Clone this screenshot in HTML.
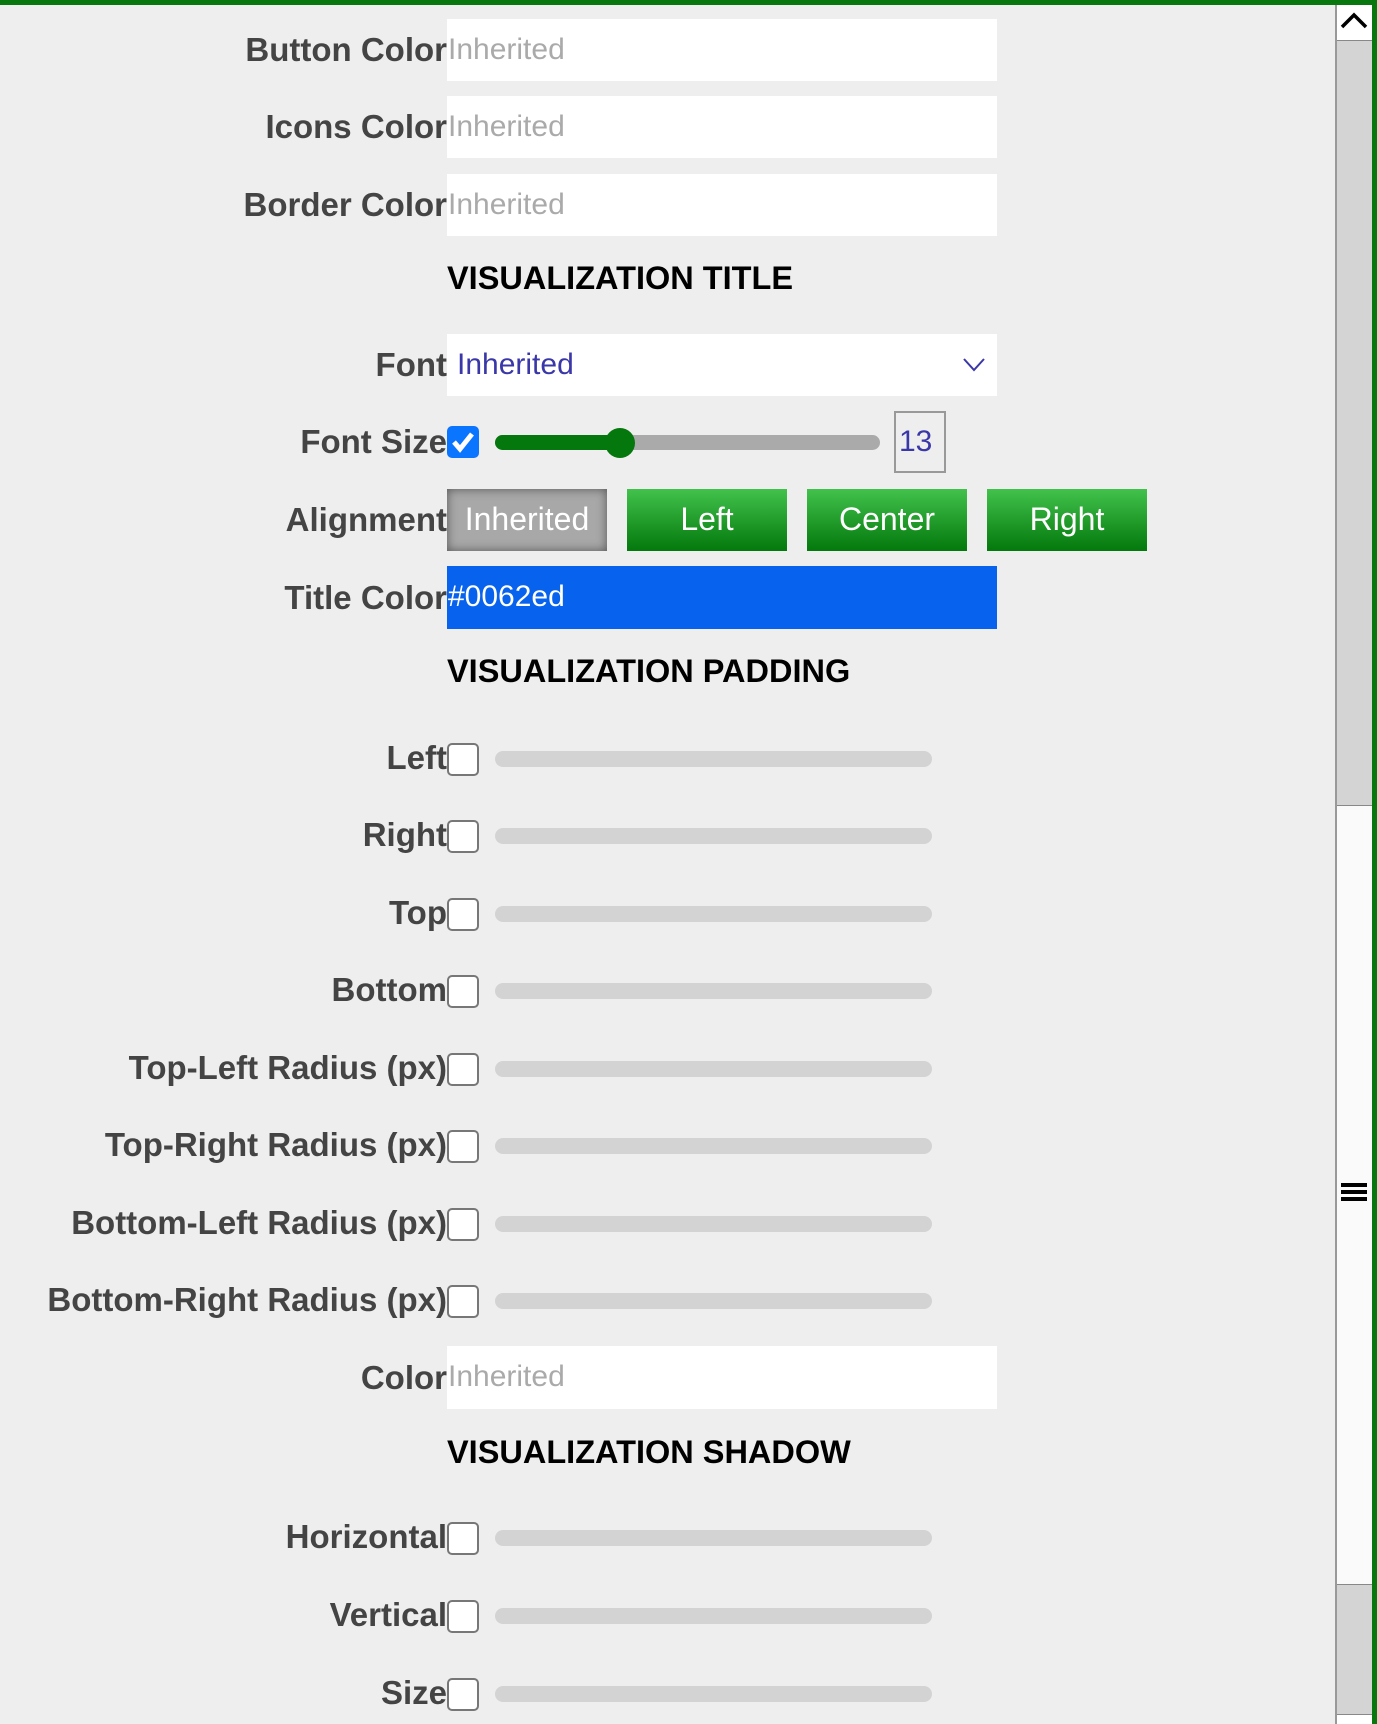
<!DOCTYPE html>
<html><head><meta charset="utf-8"><style>
*{box-sizing:border-box;margin:0;padding:0}
html,body{width:1377px;height:1724px;overflow:hidden;background:#eee;font-family:"Liberation Sans",Arial,sans-serif}
.top{position:absolute;left:0;top:0;width:1377px;height:5px;background:#08780e}
.rb{position:absolute;right:0;top:0;width:5px;height:1724px;background:#08780e}
.lab{position:absolute;right:930px;font-weight:bold;font-size:33px;color:#444;line-height:36px;white-space:nowrap}
.inp{position:absolute;left:447px;width:550px;height:62px;background:#fff;font-size:30px;color:#aaa;line-height:62px;padding-left:1px}
.h{position:absolute;left:447px;font-weight:bold;font-size:32.5px;color:#000;line-height:36px}
.cb{position:absolute;left:447px;width:32px;height:33px;border:2px solid #777;border-radius:5px;background:#fff}
.sl{position:absolute;left:495px;width:437px;height:16px;background:#d3d3d3;border-radius:8px}
.btn{position:absolute;top:489px;width:160px;height:62px;color:#fff;font-size:32px;line-height:60px;text-align:center;background:linear-gradient(#42c24c,#04780c)}
</style></head><body>
<div class="top"></div>
<div class="lab" style="top:32px">Button Color</div><div class="inp" style="top:19px">Inherited</div>
<div class="lab" style="top:109px">Icons Color</div><div class="inp" style="top:96px">Inherited</div>
<div class="lab" style="top:187px">Border Color</div><div class="inp" style="top:174px">Inherited</div>
<div class="h" style="top:260px">VISUALIZATION TITLE</div>
<div class="lab" style="top:347px">Font</div>
<div class="inp" style="top:334px;color:#3a37a8;padding-left:10px">Inherited
<svg style="position:absolute;right:12px;top:24px" width="22" height="14" viewBox="0 0 22 14"><path d="M1 1L11 12L21 1" fill="none" stroke="#3a37a8" stroke-width="2"/></svg></div>
<div class="lab" style="top:424px">Font Size</div>
<div style="position:absolute;left:447px;top:426px;width:32px;height:32px;background:#0a75ff;border-radius:5px"><svg width="32" height="32" viewBox="0 0 32 32"><path d="M7 16L13 23L25 8" fill="none" stroke="#fff" stroke-width="5"/></svg></div>
<div style="position:absolute;left:495px;top:435px;width:385px;height:15px;background:#aaa;border-radius:8px"></div>
<div style="position:absolute;left:495px;top:435px;width:125px;height:15px;background:#04780c;border-radius:8px"></div>
<div style="position:absolute;left:605px;top:428px;width:30px;height:30px;background:#04780c;border-radius:50%"></div>
<div style="position:absolute;left:894px;top:411px;width:52px;height:62px;border:2px solid #999;color:#3a37a8;font-size:30px;line-height:58px;padding-left:3px">13</div>
<div class="lab" style="top:502px">Alignment</div>
<div class="btn" style="left:447px;background:#a8a8a8;box-shadow:inset 0 0 10px #555">Inherited</div>
<div class="btn" style="left:627px">Left</div>
<div class="btn" style="left:807px">Center</div>
<div class="btn" style="left:987px">Right</div>
<div class="lab" style="top:580px">Title Color</div><div class="inp" style="top:566px;background:#0762ed;color:#fff;height:63px">#0062ed</div>
<div class="h" style="top:653px">VISUALIZATION PADDING</div>

<div class="lab" style="top:740px">Left</div><div class="cb" style="top:743px"></div><div class="sl" style="top:751px"></div>
<div class="lab" style="top:817px">Right</div><div class="cb" style="top:820px"></div><div class="sl" style="top:828px"></div>
<div class="lab" style="top:895px">Top</div><div class="cb" style="top:898px"></div><div class="sl" style="top:906px"></div>
<div class="lab" style="top:972px">Bottom</div><div class="cb" style="top:975px"></div><div class="sl" style="top:983px"></div>
<div class="lab" style="top:1050px">Top-Left Radius (px)</div><div class="cb" style="top:1053px"></div><div class="sl" style="top:1061px"></div>
<div class="lab" style="top:1127px">Top-Right Radius (px)</div><div class="cb" style="top:1130px"></div><div class="sl" style="top:1138px"></div>
<div class="lab" style="top:1205px">Bottom-Left Radius (px)</div><div class="cb" style="top:1208px"></div><div class="sl" style="top:1216px"></div>
<div class="lab" style="top:1282px">Bottom-Right Radius (px)</div><div class="cb" style="top:1285px"></div><div class="sl" style="top:1293px"></div>
<div class="lab" style="top:1360px">Color</div><div class="inp" style="top:1346px;height:63px">Inherited</div>
<div class="h" style="top:1434px">VISUALIZATION SHADOW</div>
<div class="lab" style="top:1519px">Horizontal</div><div class="cb" style="top:1522px"></div><div class="sl" style="top:1530px"></div>
<div class="lab" style="top:1597px">Vertical</div><div class="cb" style="top:1600px"></div><div class="sl" style="top:1608px"></div>
<div class="lab" style="top:1675px">Size</div><div class="cb" style="top:1678px"></div><div class="sl" style="top:1686px"></div>

<div style="position:absolute;left:1335px;top:5px;width:37px;height:1719px;background:#d4d4d4;border-left:2px solid #999"></div>
<div style="position:absolute;left:1337px;top:5px;width:35px;height:36px;background:#fff;border-bottom:1px solid #888"><svg width="35" height="36" viewBox="0 0 35 36"><path d="M5 22L17 10L29 22" fill="none" stroke="#000" stroke-width="3.5"/></svg></div>
<div style="position:absolute;left:1337px;top:805px;width:35px;height:780px;background:#fafafa;border-top:1px solid #888;border-bottom:1px solid #888"></div>
<div style="position:absolute;left:1341px;top:1183px;width:26px;height:4px;background:#000"></div>
<div style="position:absolute;left:1341px;top:1190px;width:26px;height:4px;background:#000"></div>
<div style="position:absolute;left:1341px;top:1197px;width:26px;height:4px;background:#000"></div>
<div style="position:absolute;left:1337px;top:1714px;width:35px;height:10px;background:#fff;border-top:1px solid #888"></div>
<div class="rb"></div>
</body></html>
